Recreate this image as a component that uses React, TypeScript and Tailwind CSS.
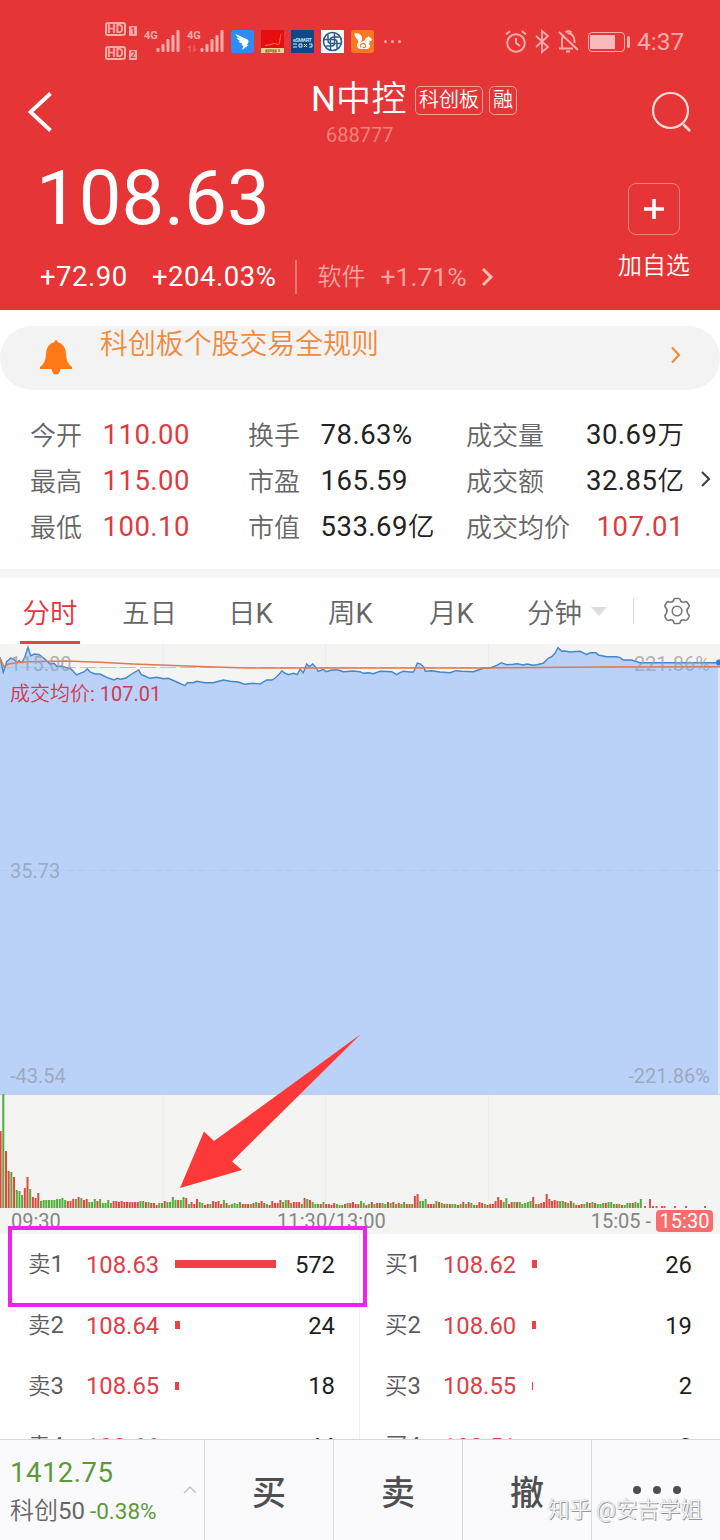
import { Fragment } from "react"
import clsx from "clsx"

const stats = [
  [
    { label: "今开", value: "110.00", red: true },
    { label: "换手", value: "78.63%" },
    { label: "成交量", value: "30.69", unit: "万" },
  ],
  [
    { label: "最高", value: "115.00", red: true },
    { label: "市盈", value: "165.59" },
    { label: "成交额", value: "32.85", unit: "亿" },
  ],
  [
    { label: "最低", value: "100.10", red: true },
    { label: "市值", value: "533.69", unit: "亿" },
    { label: "成交均价", value: "107.01", red: true },
  ],
]

const asks = [
  { label: "卖", level: 1, price: "108.63", qty: 572, bar: 101 },
  { label: "卖", level: 2, price: "108.64", qty: 24, bar: 4.5 },
  { label: "卖", level: 3, price: "108.65", qty: 18, bar: 3.5 },
  { label: "卖", level: 4, price: "108.66", qty: 44, bar: 0 },
]

const bids = [
  { label: "买", level: 1, price: "108.62", qty: 26, bar: 5 },
  { label: "买", level: 2, price: "108.60", qty: 19, bar: 3.5 },
  { label: "买", level: 3, price: "108.55", qty: 2, bar: 1 },
  { label: "买", level: 4, price: "108.51", qty: 8, bar: 0 },
]

const priceLine =
  "0,13.3 3.3,28.3 6.7,17.7 10.7,14 14,15.3 16.7,18.7 19.3,16.7 22,18.7 24.7,13.3 28,3.3 30.7,11.7 34.7,10 39.3,10.7 42.7,13.3 46.7,16.7 50,20 54,19.3 57.3,22.7 61.7,22 66,23.7 70.7,24.7 76.7,31 81.7,28.7 84,28 87.3,24.7 90,28 95,30 100,30 106.7,33.3 114,36 117.3,34.3 120.7,35.3 126,34 131.7,30 138.7,26 141.3,30.7 144.7,32 150,34.3 156.7,33.3 163.3,34.7 168.3,34.3 176.7,38 185,41.7 187.3,38.7 193.3,38.7 196.7,37.3 205,38.7 213.3,38.7 223.3,36 230,37.3 238.3,38 245,40.3 253.3,39.3 260,40 266.7,36 271.7,36 275,34.3 279.3,30 282,26.7 284,28.7 288.3,30.7 293.3,29.3 297.3,30.7 300,25.3 303.3,28.7 306.7,20 309.3,22.7 312.7,20 316.7,24.3 318.3,27.3 323.3,25.3 326,27.7 331.7,26 338.3,26 343.3,27.7 353.3,27 360,27.7 363.3,29.3 368.3,28.7 373.3,29.7 380,27.3 391.7,27.7 396.7,30.7 400,28.7 403.3,27.3 410,28 413.3,28 415.3,24.3 417.3,19 420.7,20 424,23.3 425.3,27.3 431.7,26.7 440,28 450,28.7 456,26.7 461.7,27.3 473.3,27.7 478.3,26 484,24 490,24 496.7,21.3 501.3,18.7 506.7,20.7 513.3,20.3 517.3,19.7 523.3,21 526.7,20 533.3,21.3 536.7,20.7 543.3,19.3 548.3,14.3 551.7,12.7 555,9.3 558,3.7 561.7,7.3 565,7 570,8 580,7.3 586.7,10.7 590,8.7 596,8.7 598.3,11 606.7,12.7 616.7,12.7 620,13.7 623.3,16 631.7,16 640,18.7 718,18.7"

const averageLine =
  "0,14.3 4,22.7 8.3,20 20,18.3 30,17.7 66,17 100,18.3 133,20 167,21.3 207,22.7 247,24 360,24 480,24 600,23 720,22.7"

// one entry per minute: r = up, g = down, followed by the height
const volumes = (
  "r77 g114 r57 r37 g36 r31 g18 g17 g13 r20 r31 g19 r11 r10 r15 g7 g8 g8 g8 g8 g8 g9 g9 g10 g8 r7 r7 r9 g9 r11 g10 r8 r9 g6 g6 g9 r7 g9 g5 g5 " +
  "g8 g5 r7 r7 r6 r7 r6 r6 r6 r6 r6 r6 g7 g7 r6 g6 r5 r5 r3 g5 g5 r7 g6 g6 g11 g8 r8 g8 g11 r10 g4 r6 r4 r9 g6 g5 r3 r4 g4 r7 " +
  "r6 r7 r4 g8 r5 g3 g4 g5 g4 g6 r4 r4 r4 g4 r5 g6 r5 r7 r5 g4 r3 r7 r5 r5 r8 g6 g8 r8 g5 r6 r6 r6 g4 r10 g9 r8 g6 g4 g4 " +
  "r4 g6 r4 r4 r3 r5 g4 g3 g3 r4 g5 r5 r6 r4 r4 g7 g5 r3 g4 r6 g4 r5 r5 g5 g4 r6 g5 r6 g4 r5 g4 g6 r4 r4 g4 r12 r14 g7 g7 " +
  "g9 r4 r4 r4 g7 r6 g5 r4 g4 r4 g4 g4 r3 g4 r6 g4 r6 g5 g3 r3 r6 r5 g4 r3 r4 r4 r7 r11 r8 g6 g10 r4 r6 g6 r6 g6 g4 g5 g6 g7 " +
  "r11 g4 r4 r5 r6 r14 r9 r7 r8 r7 g7 g7 r6 g5 r7 g5 r3 r3 r4 g4 g6 r5 g6 r5 g4 g4 g5 r5 g6 g6 g4 r4 g4 r3 g3 g5 g5 r5 g6 g5 g9"
)
  .split(" ")
  .map((v) => ({ up: v[0] === "r", height: Number(v.slice(1)) }))

const afterHours = [
  [644, 2],
  [649, 9],
  [652, 2],
  [655.5, 2],
  [661, 2],
  [663.5, 2],
  [674, 2],
  [685, 2],
  [704, 2],
]

function Signal() {
  return (
    <svg className="h-[23px] w-[25px] shrink-0" viewBox="0 0 25 23" fill="#f9adaa">
      <rect x="0.500" y="18" width="3" height="4" rx="1" />
      <rect x="5.500" y="14" width="3" height="8" rx="1" />
      <rect x="10.500" y="9" width="3" height="13" rx="1" />
      <rect x="15.500" y="5" width="3" height="17" rx="1" />
      <rect x="20.500" y="0" width="3" height="22" rx="1" />
    </svg>
  )
}

function HdBadge({ sim }: { sim: number }) {
  return (
    <div className="flex items-end gap-[3px]">
      <span className="flex h-[14px] w-[21px] items-center justify-center rounded-[3px] border-2 border-[#f9adaa] text-[12px] leading-none font-bold">
        HD
      </span>
      <span className="flex h-[10px] w-[8px] items-center justify-center rounded-[1px] bg-[#f9adaa] text-[9px] leading-none font-bold text-[#e53536]">
        {sim}
      </span>
    </div>
  )
}

function AppIcons() {
  return (
    <div className="flex gap-[7px]">
      <svg className="size-[23px]" viewBox="0 0 23 23">
        <rect width="23" height="23" rx="3" fill="#2b8df5" />
        <path d="M4.500 4l12 5.500q1.500 1 1 2.500l-1.500 3h1.700L11 20l1.500-4.500h-2l1-2q-3 0-4-2.500 1.500.5 2.500.200Q6.500 10 5.500 7.500l3 .8Q5 6.500 4.500 4z" fill="#fff" />
      </svg>
      <svg className="size-[23px]" viewBox="0 0 23 23">
        <rect width="23" height="23" fill="#e80d10" />
        <path d="M4 15.500l6-1 3-1 5 1L20 4" fill="none" stroke="#f07a4a" strokeWidth="1" />
        <rect y="18" width="23" height="5" fill="#f8cf94" />
        <path d="M5 20h3v2H5zM10 19v3M12 20h3v2h-3zM18 19v3" fill="none" stroke="#a5542a" strokeWidth="1.200" />
      </svg>
      <svg className="size-[23px]" viewBox="0 0 23 23">
        <rect width="23" height="23" fill="#0f4783" />
        <text x="2" y="12" fontSize="5.500" fontWeight="700" fill="#b7dcf5" textLength="19">
          eSMART
        </text>
        <path d="M2 14h4M2 17h4M8 14h3v3H8zM13 14l3 3M16 14l-3 3M18 14h3v3h-3" fill="none" stroke="#d7ecfa" strokeWidth="1" />
      </svg>
      <svg className="size-[23px]" viewBox="0 0 23 23" fill="none" stroke="#2a5c88">
        <rect width="23" height="23" fill="#fff" stroke="none" />
        <circle cx="11.500" cy="11.500" r="9" strokeWidth="1.600" />
        <path
          d="M3 9.500h10q3 0 3 3v6M20 13.500H10q-3 0-3-3v-6M9.500 20V10q0-3 3-3h6M13.500 3v10q0 3-3 3h-6"
          strokeWidth="1.500"
        />
      </svg>
      <svg className="size-[23px]" viewBox="0 0 23 23">
        <rect width="23" height="23" rx="3" fill="#f77a22" />
        <path
          d="M3 3.500Q9 2 11 7q.8 3-2 6 2-2.500 5-2.500 0-3 3-3.500l.6-1 .9 1.200q2 .8 2.500 2.800-1 1.500-3 1.300l1 1.700-1.500.5q2 1.500 1.500 3-.5 2-3 2.500H9.500Q6 18.500 6 15.500q0-2 1.500-3.500Q7 9.500 5 8z"
          fill="#fff"
        />
        <path d="M10 17.500q-1.500-3.500 2-4 3 .3 2.500 3-1 2-2.500.5" fill="none" stroke="#f77a22" strokeWidth="1.200" />
      </svg>
    </div>
  )
}

function StatusBar() {
  return (
    <div className="flex h-[70px] items-start text-[#f9adaa]">
      <div className="mt-[22px] ml-[105px] flex flex-col gap-[10px]">
        <HdBadge sim={1} />
        <HdBadge sim={2} />
      </div>
      <div className="mt-[30px] ml-[7px] flex">
        <span className="w-[12px] text-[11px] leading-[12px] font-bold">4G</span>
        <Signal />
      </div>
      <div className="mt-[30px] ml-[6px] flex">
        <div className="flex w-[13px] flex-col">
          <span className="text-[11px] leading-[12px] font-bold">4G</span>
          <svg className="mt-[3px] h-[7px] w-[10px] opacity-40" viewBox="0 0 10 7" fill="none" stroke="#f9adaa">
            <path d="M1 3l2-2v6M9 4L7 6V0" strokeWidth="1.200" />
          </svg>
        </div>
        <Signal />
      </div>
      <div className="mt-[30px] ml-[6px]">
        <AppIcons />
      </div>
      <div className="mt-[40px] ml-[10px] flex gap-[4px]">
        <i className="size-[3px] rounded-full bg-[#f9adaa]" />
        <i className="size-[3px] rounded-full bg-[#f9adaa]" />
        <i className="size-[3px] rounded-full bg-[#f9adaa]" />
      </div>
      <div className="mt-[28px] mr-[35px] ml-auto flex items-center">
        <svg className="h-[26px] w-[76px]" viewBox="0 0 76 26" fill="none" stroke="#f9adaa" strokeWidth="2">
          <circle cx="13" cy="14" r="8.800" />
          <path d="M13 9v5l4 3M3 5.500L7 2M23 5.500L19 2" />
          <path d="M33 7l12 11-6 5V2l6 5-12 11" strokeWidth="1.800" />
          <path d="M56 19.500h14M59 19v-8q0-3 2-5M64.500 4q7 1 7 8v2M56 3l19 18M63 22.500h4M62.500 3.500q3-3 6 0" strokeWidth="1.900" />
        </svg>
        <div className="ml-[9px] flex h-[20px] w-[37px] items-center rounded-[4px] border-[1.5px] border-[#f9adaa] pl-px">
          <i className="h-[14px] w-[25px] bg-[#f9b9bb]" />
        </div>
        <i className="ml-[2px] h-[12px] w-[3px] rounded bg-[#f9adaa]" />
        <span className="ml-[7px] w-[48px] text-[24.500px] leading-[28px] whitespace-nowrap">4:37</span>
      </div>
    </div>
  )
}

function Header() {
  return (
    <header className="h-[310px] shrink-0 bg-[#e53536] text-white">
      <StatusBar />
      <div className="flex h-[84px] items-start">
        <svg className="mt-[21px] ml-[27px] h-[42px] w-[27px]" viewBox="0 0 27 42" fill="none" stroke="#fff">
          <path d="M23.500 2.500L3.500 21l20 18.500" strokeWidth="3.800" />
        </svg>
        <div className="ml-[257px] w-[212px]">
          <div className="flex h-[52px] items-center">
            <h1 className="mt-[8px] w-[98px] text-[35px] leading-[50px] whitespace-nowrap">
              N<span className="font-[350] tracking-[0.500px]">中控</span>
            </h1>
            <span className="mt-[8px] ml-[6px] flex h-[29px] w-[68px] items-center justify-center rounded-[5px] border border-[#f6a09c] text-[20px] leading-none font-[350]">
              科创板
            </span>
            <span className="mt-[8px] ml-[6px] flex h-[29px] w-[28px] items-center justify-center rounded-[5px] border border-[#f6a09c] text-[20px] leading-none font-[350]">
              融
            </span>
          </div>
          <p className="ml-[15px] text-[20px] leading-[27px] text-[#f2807b]">688777</p>
        </div>
        <svg className="mt-[20px] mr-[27px] ml-auto size-[44px]" viewBox="0 0 44 44" fill="none" stroke="#fcdcd6">
          <circle cx="21.500" cy="20.500" r="17.500" strokeWidth="2.200" />
          <path d="M34.500 34.500l6.500 6.500" strokeWidth="2.600" />
        </svg>
      </div>
      <div className="flex justify-between">
        <div className="pl-[36px]">
          <div className="h-[90px] text-[76px] leading-[88px]">108.63</div>
          <div className="mt-[16px] flex h-[34px] items-center pl-[4px] text-[27.500px] leading-[34px]">
            <span className="w-[112px] tracking-[0.5px]">+72.90</span>
            <span className="w-[143px] tracking-[0.5px]">+204.03%</span>
            <i className="h-[34px] w-[1.500px] bg-[#ee7572]" />
            <span className="ml-[21px] w-[63px] text-[24px] font-[350] text-[#f6a5a0]">软件</span>
            <span className="text-[26.500px] text-[#f6a5a0]">+1.71%</span>
            <svg className="ml-[13px] h-[20px] w-[14px]" viewBox="0 0 14 20" fill="none" stroke="#f9bdb6" strokeWidth="3">
              <path d="M3 2l8 8-8 8" />
            </svg>
          </div>
        </div>
        <div className="mr-[28px] flex w-[76px] flex-col items-center">
          <div className="mt-[29px] flex size-[52px] items-center justify-center rounded-[8px] border-[1.5px] border-[#f08380]">
            <svg className="size-[20px]" viewBox="0 0 20 20" stroke="#fff" strokeWidth="3.600">
              <path d="M10 0v20M0 10h20" />
            </svg>
          </div>
          <span className="mt-[13px] text-[24px] leading-[36px] font-[350]">加自选</span>
        </div>
      </div>
    </header>
  )
}

function RulesBanner() {
  return (
    <div className="mt-[16px] flex h-[64px] shrink-0 rounded-full bg-[#f3f3f3]">
      <svg className="mt-[13px] ml-[39px] h-[36px] w-[34px]" viewBox="0 0 34 36" fill="#ff7a17">
        <path d="M15.500 3q0-2 1.500-2t1.500 2q8 2 8.500 12 .2 9 6 13v2H1v-2q5.800-4 6-13Q7.500 5 15.500 3z" />
        <path d="M12.500 30h9q-1 5.500-4.500 5.500T12.500 30z" />
      </svg>
      <span className="ml-[27px] text-[27.900px] leading-[37px] font-[350] text-[#f08a3c]">科创板个股交易全规则</span>
      <svg className="mt-[20px] mr-[38px] ml-auto h-[18px] w-[14px]" viewBox="0 0 14 18" fill="none" stroke="#f08a3c" strokeWidth="2.200">
        <path d="M4 1.500L11 9l-7 7.500" />
      </svg>
    </div>
  )
}

function Stats() {
  return (
    <section className="mt-[22px] flex h-[157px] shrink-0 items-start">
      <div className="grid w-[684px] grid-cols-[218px_218px_1fr] pl-[30px]">
        {stats.map((row, r) => (
          <Fragment key={r}>
            {row.map((s, c) => (
              <div key={s.label} className={clsx("flex h-[46px] items-center leading-[46px]", c === 2 && "justify-between")}>
                <span className={clsx("pt-px text-[26px] font-[350] whitespace-nowrap text-[#666]", c < 2 && "w-[72.500px]")}>
                  {s.label}
                </span>
                <span
                  className={clsx(
                    "text-[27.500px] tracking-[0.5px] whitespace-nowrap",
                    s.red ? "text-[#e03a40]" : "text-[#222]"
                  )}
                >
                  {s.value}
                  {s.unit && <span className="text-[26.500px] font-[350] tracking-normal">{s.unit}</span>}
                </span>
              </div>
            ))}
          </Fragment>
        ))}
      </div>
      <svg className="mt-[58px] ml-[15px] h-[18px] w-[14px]" viewBox="0 0 14 18" fill="none" stroke="#444" strokeWidth="2.200">
        <path d="M3 2l7 7-7 7" />
      </svg>
    </section>
  )
}

function Tabs() {
  return (
    <nav className="flex h-[75px] shrink-0 border-t-[9px] border-[#f6f6f6] text-[27.500px] leading-[72px] font-[350] text-[#666]">
      <span className="ml-[20px] h-[66px] w-[60px] border-b-[3px] border-[#dd4744] text-center text-[#e0363c]">分时</span>
      <span className="ml-[42px] w-[106px]">五日</span>
      <span className="w-[100px]">
        日<span className="font-normal">K</span>
      </span>
      <span className="w-[101px]">
        周<span className="font-normal">K</span>
      </span>
      <span className="w-[98px]">
        月<span className="font-normal">K</span>
      </span>
      <span className="w-[64px]">分钟</span>
      <svg className="mt-[29px] h-[9px] w-[16px]" viewBox="0 0 16 9" fill="#dedede">
        <path d="M0 0h16L8 9z" />
      </svg>
      <i className="mt-[20px] ml-[26px] h-[26px] w-px bg-[#ddd]" />
      <svg className="mt-[19px] ml-[29px] size-[28px]" viewBox="0 0 28 28" fill="none" stroke="#777" strokeWidth="1.600">
        <path
          d="M12 1.500h4q1 0 1.200 1.200.4 2.600 3.300 2.500l2.300-.6q1 0 1.700 1l1.500 2.600q.5 1-.3 1.900-3.400 3.400 0 7.800.8.9.3 1.900l-1.500 2.600q-.7 1-1.700 1l-2.300-.6q-2.900-.1-3.300 2.500-.2 1.200-1.200 1.200h-4q-1 0-1.200-1.200-.4-2.600-3.300-2.500l-2.300.6q-1 0-1.700-1L2 19.800q-.5-1 .3-1.900 3.400-4.400 0-7.800-.8-.9-.3-1.900l1.500-2.600q.7-1 1.700-1l2.300.6q2.900.1 3.300-2.500.2-1.200 1.200-1.200z"
          strokeLinejoin="round"
        />
        <circle cx="14" cy="14" r="4.800" />
      </svg>
    </nav>
  )
}

function Chart() {
  return (
    <section className="relative shrink-0 bg-[#f4f4f3]">
      <svg className="block h-[564px] w-[720px]" viewBox="0 0 720 564">
        <path d="M163 0v564M325.500 0v564M488.500 0v564" stroke="#ebecee" />
        <polygon points={`0,450 ${priceLine} 718,450`} fill="#bad2f8" />
        <path d="M718 19h2v431h-2z" fill="#dfe8f6" />
        <path d="M0 226.500h720" stroke="#abc4ea" strokeDasharray="8 3" opacity="0.600" />
        <path d="M0 450.500h720" stroke="#c6c8ee" />
        <path d="M0 23.500h720" stroke="#f0aeb2" strokeDasharray="16 4" />
        <polyline points={priceLine} fill="none" stroke="#4386cd" strokeWidth="1.400" />
        <polyline points={averageLine} fill="none" stroke="#e2784e" strokeWidth="1.500" />
        <circle cx="719" cy="18.500" r="3" fill="#2f7de0" />
        {volumes.map((v, i) => (
          <rect
            key={i}
            x={i * 2.69 - 0.4}
            y={564 - v.height}
            width="2"
            height={v.height}
            fill={v.up ? "#e0483f" : "#52ad3a"}
          />
        ))}
        {afterHours.map(([x, h]) => (
          <rect key={x} x={x} y={564 - h} width="2" height={h} fill="#e05058" />
        ))}
        <polygon points="180,544 204,487.500 214,497 361,390 232,517.500 242,526" fill="#fc3938" />
      </svg>
      <div className="flex h-[26px] items-center text-[20px] leading-[26px] text-[#858585]">
        <span className="ml-[11px] w-[266px]">09:30</span>
        <span className="tracking-[0.100px]">11:30/13:00</span>
        <span className="ml-auto">15:05 -</span>
        <span className="mr-[7px] ml-[5px] h-[22px] w-[57px] rounded-[4px] bg-[#fb6d6d] text-center leading-[23px] text-white">15:30</span>
      </div>

      {/* scale labels over the plot */}
      <div className="absolute inset-x-[10px] top-[7px] flex justify-between text-[20px] leading-[26px] text-[#9ba1aa]/80">
        <span>115.00</span>
        <span>221.86%</span>
      </div>
      <span className="absolute top-[37px] left-[10px] text-[20px] leading-[26px] text-[#d23a52]">
        <span className="font-[350]">成交均价</span>: 107.01
      </span>
      <span className="absolute top-[214px] left-[10px] text-[20px] leading-[26px] text-[#9caac0]">35.73</span>
      <div className="absolute inset-x-[10px] top-[419px] flex justify-between text-[20px] leading-[26px] text-[#9caac0]">
        <span>-43.54</span>
        <span>-221.86%</span>
      </div>
    </section>
  )
}

function Orders({ rows }: { rows: typeof asks }) {
  return (
    <div className="flex-1">
      {rows.map((o) => (
        <div key={o.level} className="flex h-[60.700px] items-center pr-[24px] pl-[28px] text-[23.800px] leading-[28px]">
          <span className="w-[58px] text-[#5c5c5c]">
            <span className="text-[22.500px] font-[350]">{o.label}</span>
            {o.level}
          </span>
          <span className="w-[89px] pt-px text-[#da4048]">{o.price}</span>
          <i className="h-[8px] bg-[#f04046]" style={{ width: o.bar }} />
          <span className="ml-auto pt-px text-[#1e1e1e]">{o.qty}</span>
        </div>
      ))}
    </div>
  )
}

function OrderBook() {
  return (
    <section className="relative flex h-[205px] shrink-0 overflow-hidden">
      <Orders rows={asks} />
      <i className="w-px bg-[#f1f1f1]" />
      <div className="-ml-[3px] flex w-[363px] pr-[4px]">
        <Orders rows={bids} />
      </div>
    </section>
  )
}

function TradeBar() {
  return (
    <footer className="flex h-[101px] shrink-0 border-t border-[#d6d6d8] bg-[#fafafc] text-[#4f4f4f]">
      <div className="flex w-[204px] justify-between pr-[7px] pl-[10px]">
        <div>
          <div className="mt-[16px] text-[27.500px] leading-[34px] tracking-[0.500px] text-[#5b9a3a]">1412.75</div>
          <div className="mt-[4px] flex text-[24px] leading-[34px] whitespace-nowrap text-[#666]">
            <span className="font-[350]">科创</span>50
            <span className="ml-[5px] text-[22.500px] text-[#5b9a3a]">-0.38%</span>
          </div>
        </div>
        <svg className="mt-[45px] h-[9px] w-[14px] shrink-0" viewBox="0 0 14 9" fill="none" stroke="#c4c4c4" strokeWidth="1.500">
          <path d="M1 8l6-6 6 6" />
        </svg>
      </div>
      {["买", "卖", "撤"].map((action) => (
        <button key={action} className="w-[129px] border-l border-[#d9d9db] pt-[6px] text-[34px] font-medium">
          {action}
        </button>
      ))}
      <div className="flex flex-1 justify-center gap-[12px] border-l border-[#d9d9db] pt-[46px] pl-[2px]">
        <i className="size-[8px] rounded-full bg-[#4f4f4f]" />
        <i className="size-[8px] rounded-full bg-[#4f4f4f]" />
        <i className="size-[8px] rounded-full bg-[#4f4f4f]" />
      </div>
    </footer>
  )
}

export default function App() {
  return (
    <main className="relative flex h-[1540px] w-[720px] flex-col overflow-hidden bg-white font-['Roboto','Noto_Sans_CJK_SC',sans-serif]">
      <Header />
      <RulesBanner />
      <Stats />
      <Tabs />
      <Chart />
      <OrderBook />
      <TradeBar />

      {/* highlight around the first ask */}
      <div className="absolute top-[1226px] left-[8px] h-[81px] w-[359px] border-[4.500px] border-[#ee22ee]" />
      <span className="absolute top-[1495px] left-[548px] text-[21.500px] leading-[30px] font-[350] whitespace-nowrap text-[#f4f4f4] [text-shadow:1px_1px_0px_#999,0_0_1px_#999]">
        知乎 @安吉学姐
      </span>
    </main>
  )
}
